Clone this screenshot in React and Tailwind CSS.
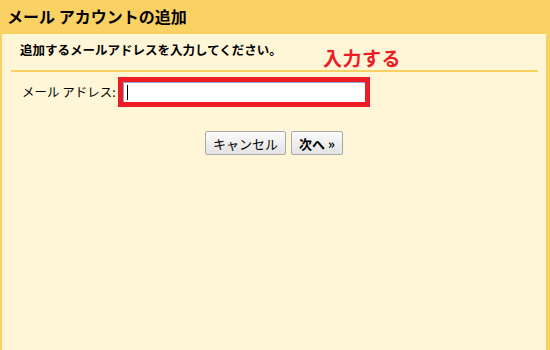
import React from "react";

export default function App() {
  return (
    <div
      className="w-[550px] h-[350px] bg-[#fad163] flex flex-col overflow-hidden text-black"
      style={{ fontFamily: '"Noto Sans CJK JP", "Liberation Sans", sans-serif' }}
    >
      {/* ヘッダー */}
      <div className="h-[34px] shrink-0 flex items-center pl-[7px] pb-[2px]">
        <h1 className="text-[16px] font-bold leading-none">
          メール アカウントの追加
        </h1>
      </div>

      {/* 本文 */}
      <div className="relative flex-1 ml-[2px] mr-[4px] bg-[#fff6d7] flex flex-col">
        <p className="pl-[18px] pt-[8px] text-[12.5px] font-bold leading-[16px] h-[36px]">
          追加するメールアドレスを入力してください。
        </p>
        <span className="absolute left-[321px] top-[12px] text-[19px] font-bold leading-[24px] text-[#ee1c25] tracking-[0.5px]">
          入力する
        </span>
        <div className="ml-[9px] mr-[8px] h-[2px] bg-[#fad163]" />

        <div className="flex items-center mt-[5px] pl-[20px]">
          <label className="w-[96px] text-[12.5px] leading-none whitespace-nowrap">
            メール アドレス:
          </label>
          <div className="w-[252px] h-[30px] border-[5px] border-[#ee1c25] bg-white flex">
            <div className="flex-1 border-t border-l border-[#8fa9d4] flex items-center pl-[3px]">
              <span className="w-[1px] h-[15px] bg-black" />
            </div>
          </div>
        </div>

        <div className="flex justify-center gap-[5px] mt-[24px]">
          <button
            type="button"
            className="h-[24px] w-[81px] border border-[#a9a9a9] rounded-[2px] bg-gradient-to-b from-[#fbfbfb] to-[#e3e3e3] text-[13px] leading-none"
          >
            キャンセル
          </button>
          <button
            type="button"
            className="h-[24px] w-[52px] border border-[#a9a9a9] rounded-[2px] bg-gradient-to-b from-[#fbfbfb] to-[#e3e3e3] text-[13px] font-bold leading-none"
          >
            次へ »
          </button>
        </div>
      </div>
    </div>
  );
}
